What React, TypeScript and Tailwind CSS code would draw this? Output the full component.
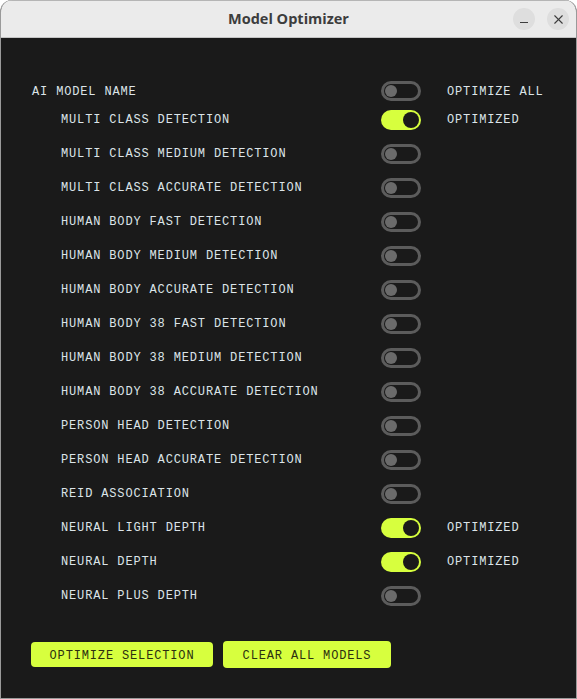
import { X } from "lucide-react";

const models = [
  { name: "MULTI CLASS DETECTION", on: true },
  { name: "MULTI CLASS MEDIUM DETECTION", on: false },
  { name: "MULTI CLASS ACCURATE DETECTION", on: false },
  { name: "HUMAN BODY FAST DETECTION", on: false },
  { name: "HUMAN BODY MEDIUM DETECTION", on: false },
  { name: "HUMAN BODY ACCURATE DETECTION", on: false },
  { name: "HUMAN BODY 38 FAST DETECTION", on: false },
  { name: "HUMAN BODY 38 MEDIUM DETECTION", on: false },
  { name: "HUMAN BODY 38 ACCURATE DETECTION", on: false },
  { name: "PERSON HEAD DETECTION", on: false },
  { name: "PERSON HEAD ACCURATE DETECTION", on: false },
  { name: "REID ASSOCIATION", on: false },
  { name: "NEURAL LIGHT DEPTH", on: true },
  { name: "NEURAL DEPTH", on: true },
  { name: "NEURAL PLUS DEPTH", on: false },
];

function Toggle({ on }: { on: boolean }) {
  if (on) {
    return (
      <div className="flex h-5 w-10 items-center justify-end rounded-full bg-[#d7ff3e] pr-[2px]">
        <div className="size-4 rounded-full bg-[#1a1a1a]" />
      </div>
    );
  }
  return (
    <div className="flex h-5 w-10 items-center rounded-full border-[3px] border-[#5c5c5c] pl-[1px]">
      <div className="size-3 rounded-full bg-[#6b6b6b]" />
    </div>
  );
}

function Row({ name, on }: { name: string; on: boolean }) {
  return (
    <div className="flex h-[34px] items-center">
      <span className="w-[349px] pl-[29px]">{name}</span>
      <Toggle on={on} />
      {on && <span className="ml-[26px]">OPTIMIZED</span>}
    </div>
  );
}

export default function App() {
  return (
    <div className="flex h-[699px] w-[577px] flex-col overflow-hidden rounded-t-[12px] border border-t-0 border-[#9a9a9a] bg-[#1a1a1a]">
      <div className="relative flex h-[38px] shrink-0 items-center justify-center border-t border-b border-t-[#b5b5b5] border-b-[#c4c4c4] bg-[#ebebeb] font-['Open_Sans',sans-serif] text-[14.5px] font-bold text-[#3d3d3d]">
        Model Optimizer
        <div className="absolute top-[7px] left-[512px] flex size-[22px] items-end justify-center rounded-full bg-[#dedede] pb-[7px]">
          <div className="h-px w-2 bg-[#3d3d3d]" />
        </div>
        <div className="absolute top-[7px] left-[546px] flex size-[22px] items-center justify-center rounded-full bg-[#dedede]">
          <X size={15} strokeWidth={1.8} color="#3d3d3d" />
        </div>
      </div>
      <div className="flex flex-1 flex-col pr-[30px] pl-[31px] pt-[43px] font-['Liberation_Mono',monospace] text-[12px] tracking-[0.85px] text-[#dce4e8]">
        <div className="flex h-5 items-center">
          <span className="w-[349px] pt-[2px]">AI MODEL NAME</span>
          <Toggle on={false} />
          <span className="ml-[26px] pt-[2px]">OPTIMIZE ALL</span>
        </div>
        <div className="mt-[2px] flex flex-col">
          {models.map((m) => (
            <Row key={m.name} name={m.name} on={m.on} />
          ))}
        </div>
        <div className="-ml-[1px] mt-[28px] flex items-center gap-[10px] text-[#2c2f10]">
          <button className="h-[25px] w-[182px] rounded-[4px] bg-[#d7ff3e] pt-[2px]">OPTIMIZE SELECTION</button>
          <button className="h-[27px] w-[168px] rounded-[4px] bg-[#d7ff3e] pt-[2px]">CLEAR ALL MODELS</button>
        </div>
      </div>
    </div>
  );
}
